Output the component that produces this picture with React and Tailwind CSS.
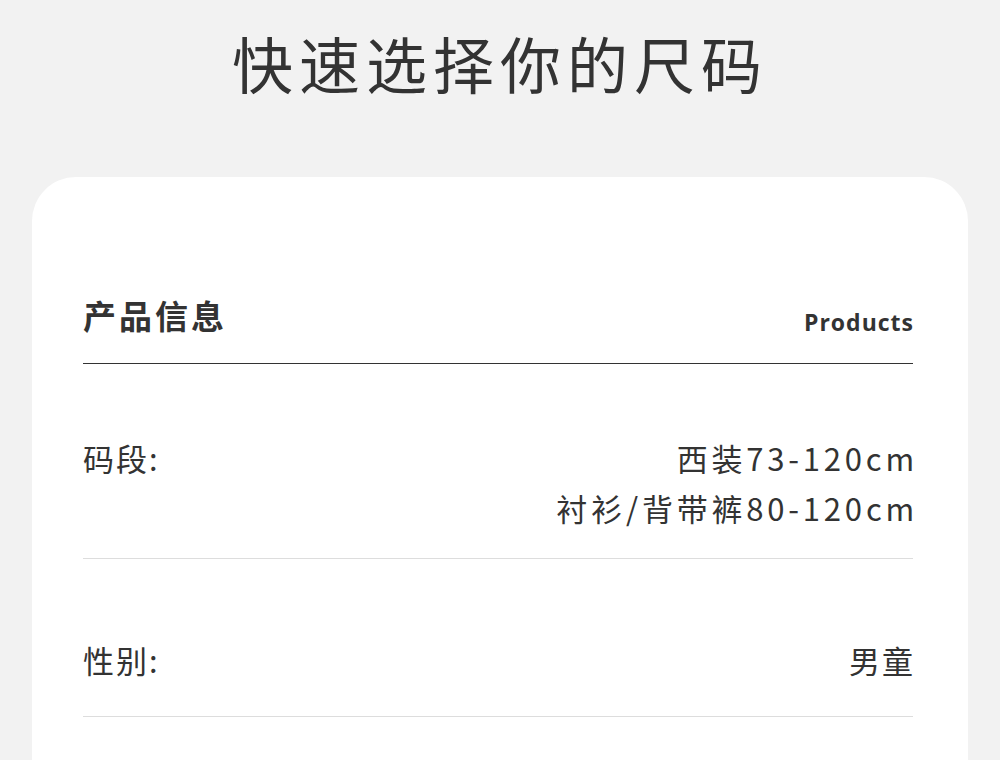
export default function App() {
  const font = { fontFamily: '"Noto Sans CJK SC", "Noto Sans", sans-serif' };
  return (
    <div className="w-[1000px] h-[760px] overflow-hidden bg-[#f2f2f2] text-[#333333]" style={font}>
      <h1 className="pt-[20px] text-center text-[61px] leading-[86px] tracking-[6px] font-normal">快速选择你的尺码</h1>
      <div className="mx-[32px] mt-[71px] h-[700px] rounded-[44px] bg-white pl-[51px] pr-[55px] pt-[116px]">
        {/* header */}
        <div className="flex items-end justify-between border-b border-[#333333] pb-[26px]">
          <div className="text-[33px] leading-[44px] font-bold tracking-[3px]">产品信息</div>
          <div className="text-[23px] leading-[30px] font-bold tracking-[1px] mr-[-1px]" style={{ fontFamily: '"Open Sans", sans-serif' }}>Products</div>
        </div>
        {/* 码段 */}
        <div className="flex justify-between border-b border-[#dddddd] pt-[69px] pb-[25px] text-[31px] leading-[50px]">
          <div className="tracking-[2px]">码段:</div>
          <div className="text-right tracking-[3.8px] mr-[-5px]">
            <div>西装73-120cm</div>
            <div>衬衫/背带裤80-120cm</div>
          </div>
        </div>
        {/* 性别 */}
        <div className="flex justify-between border-b border-[#dddddd] pt-[76px] pb-[31px] text-[31px] leading-[50px]">
          <div className="tracking-[2px]">性别:</div>
          <div className="tracking-[2px] mr-[-2px]">男童</div>
        </div>
      </div>
    </div>
  );
}
